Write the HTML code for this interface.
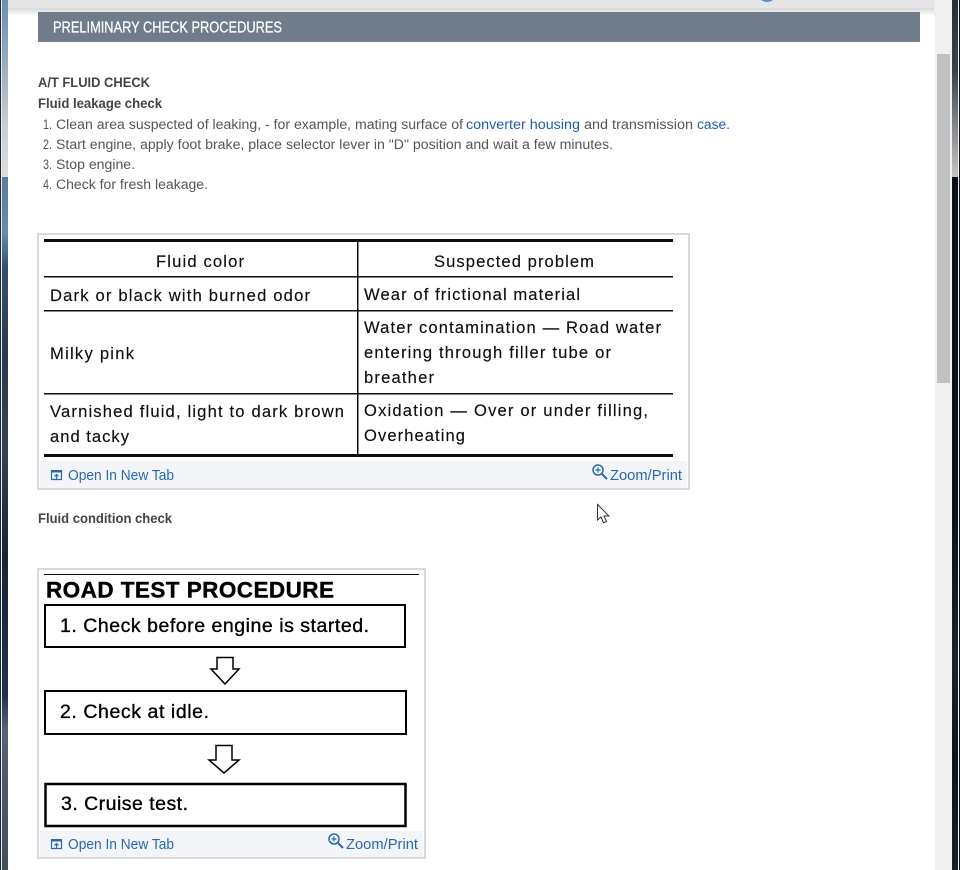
<!DOCTYPE html>
<html><head><meta charset="utf-8"><style>
html,body{margin:0;padding:0;width:960px;height:870px;overflow:hidden;background:#fff}
svg{display:block}
text{font-family:"Liberation Sans",sans-serif}
.b{font-weight:bold;font-size:13.5px;fill:#444}
.t{font-size:13.5px;fill:#555}
.l{font-size:13.5px;fill:#1f5fa8}
.f{font-size:14.5px;fill:#2a68ad}
.s{font-size:16.6px;fill:#111;stroke:#111;stroke-width:.15px}
.r{font-size:19.5px;fill:#000;stroke:#000;stroke-width:.35px}
</style></head><body>
<svg width="960" height="870" viewBox="0 0 960 870" xmlns="http://www.w3.org/2000/svg">
<defs>
<linearGradient id="lt" x1="0" y1="0" x2="0" y2="1"><stop offset="0" stop-color="#6f8dab"/><stop offset=".4" stop-color="#9fb0c0"/><stop offset=".7" stop-color="#c9cccf"/><stop offset="1" stop-color="#dedede"/></linearGradient>
<linearGradient id="lb" x1="0" y1="0" x2="0" y2="1"><stop offset="0" stop-color="#5f7a96"/><stop offset=".08" stop-color="#6a8cab"/><stop offset=".13" stop-color="#3a5069"/><stop offset=".25" stop-color="#2b3a4c"/><stop offset=".4" stop-color="#36424f"/><stop offset=".55" stop-color="#1a2534"/><stop offset=".75" stop-color="#23344a"/><stop offset=".8" stop-color="#5a6478"/><stop offset=".85" stop-color="#535a6c"/><stop offset="1" stop-color="#43515a"/></linearGradient>
<linearGradient id="rt" x1="0" y1="0" x2="0" y2="1"><stop offset="0" stop-color="#2a3034"/><stop offset=".4" stop-color="#3c4347"/><stop offset=".75" stop-color="#8b8f92"/><stop offset="1" stop-color="#c4c4c4"/></linearGradient>
<linearGradient id="rb" x1="0" y1="0" x2="0" y2="1"><stop offset="0" stop-color="#0b1116"/><stop offset=".5" stop-color="#0d1317"/><stop offset=".7" stop-color="#1d2328"/><stop offset=".85" stop-color="#0e1317"/><stop offset="1" stop-color="#1a2024"/></linearGradient>
<linearGradient id="sh" x1="0" y1="0" x2="0" y2="1"><stop offset="0" stop-color="#d8d8d8"/><stop offset="1" stop-color="#fff"/></linearGradient>
<filter id="soft" filterUnits="userSpaceOnUse" x="0" y="0" width="960" height="870"><feGaussianBlur stdDeviation=".35"/></filter>
</defs>

<!-- backdrop left -->
<rect x="0" y="0" width="1" height="870" fill="#1d2a38"/>
<rect x="1" y="0" width="1" height="870" fill="#e8ecef"/>
<rect x="2" y="0" width="6" height="177" fill="url(#lt)"/>
<rect x="2" y="177" width="6" height="693" fill="url(#lb)"/>
<!-- backdrop right -->
<rect x="952" y="0" width="6" height="177" fill="url(#rt)"/>
<rect x="952" y="177" width="6" height="693" fill="url(#rb)"/>
<rect x="958" y="0" width="1" height="870" fill="#f2f2f2"/>
<rect x="959" y="0" width="1" height="870" fill="#12171b"/>
<!-- scrollbar -->
<rect x="935" y="0" width="17" height="870" fill="#f0f0f0"/>
<rect x="937" y="54" width="13" height="329" fill="#c1c1c1"/>

<!-- top bar -->
<rect x="8" y="8" width="927" height="8" fill="url(#sh)"/>
<rect x="934" y="0" width="1" height="16" fill="#eaeaea"/>
<rect x="8" y="0" width="926" height="8" fill="#e6e6e8"/>
<ellipse cx="767" cy="-6" rx="9" ry="8" fill="#5a8fd6"/>

<!-- header -->
<rect x="38" y="12" width="882" height="30" fill="#717c8a"/>
<text x="53" y="32.500" font-size="15.500" fill="#fff" stroke="#fff" stroke-width=".25" textLength="229" lengthAdjust="spacingAndGlyphs">PRELIMINARY CHECK PROCEDURES</text>

<!-- body text -->
<text class="b" x="38" y="87" textLength="112" lengthAdjust="spacingAndGlyphs">A/T FLUID CHECK</text>
<text class="b" x="38" y="108" textLength="124" lengthAdjust="spacingAndGlyphs">Fluid leakage check</text>
<text class="t" x="43" y="129" textLength="9" lengthAdjust="spacingAndGlyphs">1.</text>
<text class="t" x="56" y="129" textLength="407" lengthAdjust="spacingAndGlyphs">Clean area suspected of leaking, - for example, mating surface of</text>
<text class="l" x="466" y="129" textLength="114" lengthAdjust="spacingAndGlyphs">converter housing</text>
<text class="t" x="584" y="129" textLength="109" lengthAdjust="spacingAndGlyphs">and transmission</text>
<text class="l" x="697" y="129" textLength="33" lengthAdjust="spacingAndGlyphs">case.</text>
<text class="t" x="43" y="149" textLength="9" lengthAdjust="spacingAndGlyphs">2.</text>
<text class="t" x="56" y="149" textLength="557" lengthAdjust="spacingAndGlyphs">Start engine, apply foot brake, place selector lever in "D" position and wait a few minutes.</text>
<text class="t" x="43" y="169" textLength="9" lengthAdjust="spacingAndGlyphs">3.</text>
<text class="t" x="56" y="169" textLength="79" lengthAdjust="spacingAndGlyphs">Stop engine.</text>
<text class="t" x="43" y="189" textLength="9" lengthAdjust="spacingAndGlyphs">4.</text>
<text class="t" x="56" y="189" textLength="152" lengthAdjust="spacingAndGlyphs">Check for fresh leakage.</text>

<!-- figure 1 -->
<rect x="38" y="234" width="651" height="255" fill="#fff" stroke="#d9d9d9" stroke-width="2"/>
<rect x="40" y="461" width="647" height="27" fill="#f3f5f9"/>
<g filter="url(#soft)">
<g fill="#111">
<rect x="44" y="239" width="629" height="3"/>
<rect x="44" y="276" width="629" height="1.500"/>
<rect x="44" y="310" width="629" height="1.500"/>
<rect x="44" y="393" width="629" height="1.500"/>
<rect x="44" y="454" width="629" height="3"/>
<rect x="357" y="240" width="1.500" height="215"/>
</g>
<text class="s" x="156" y="267" textLength="88" lengthAdjust="spacing">Fluid color</text>
<text class="s" x="434" y="267" textLength="160" lengthAdjust="spacing">Suspected problem</text>
<text class="s" x="50" y="301" textLength="260" lengthAdjust="spacing">Dark or black with burned odor</text>
<text class="s" x="364" y="300" textLength="216" lengthAdjust="spacing">Wear of frictional material</text>
<text class="s" x="364" y="333" textLength="297" lengthAdjust="spacing">Water contamination — Road water</text>
<text class="s" x="364" y="358" textLength="247" lengthAdjust="spacing">entering through filler tube or</text>
<text class="s" x="364" y="383" textLength="70" lengthAdjust="spacing">breather</text>
<text class="s" x="50" y="359" textLength="84" lengthAdjust="spacing">Milky pink</text>
<text class="s" x="50" y="417" textLength="294" lengthAdjust="spacing">Varnished fluid, light to dark brown</text>
<text class="s" x="50" y="442" textLength="79" lengthAdjust="spacing">and tacky</text>
<text class="s" x="364" y="416" textLength="284" lengthAdjust="spacing">Oxidation — Over or under filling,</text>
<text class="s" x="364" y="441" textLength="101" lengthAdjust="spacing">Overheating</text>
</g>

<!-- figure 1 footer -->
<g fill="none" stroke="#2a68ad">
<path d="M51.500 471v8.500h10v-8.500z" stroke-width="1.200"/>
<path d="M51 470h11v2.500H51z" fill="#2a68ad" stroke="none"/>
<path d="M56.500 479v-4.500M54.500 476.500l2-2 2 2" stroke-width="1.200"/>
<circle cx="598" cy="470" r="5" stroke-width="1.500"/>
<path d="M602 474l5 5" stroke-width="2"/>
<path d="M595.500 470h5M598 467.500v5" stroke-width="1.200"/>
</g>
<text class="f" x="68" y="480" textLength="106" lengthAdjust="spacingAndGlyphs">Open In New Tab</text>
<text class="f" x="610" y="480" textLength="72" lengthAdjust="spacingAndGlyphs">Zoom/Print</text>

<text class="b" x="38" y="523" textLength="134" lengthAdjust="spacingAndGlyphs">Fluid condition check</text>

<!-- cursor -->
<path d="M597.500 504.500v15.500l3.500-3 2.500 5.800 3-1.300-2.500-5.500h5z" fill="#fff" stroke="#333" stroke-width="1"/>

<!-- figure 2 -->
<rect x="38" y="569" width="387" height="289" fill="#fff" stroke="#d9d9d9" stroke-width="2"/>
<rect x="40" y="831" width="383" height="26" fill="#f3f5f9"/>
<g filter="url(#soft)">
<rect x="44" y="574" width="375" height="1" fill="#111"/>
<text x="46" y="597.500" font-size="22.500" font-weight="bold" fill="#000" stroke="#000" stroke-width=".4" textLength="288" lengthAdjust="spacing">ROAD TEST PROCEDURE</text>
<g fill="none" stroke="#000">
<rect x="45" y="605" width="360" height="42" stroke-width="2"/>
<rect x="45" y="691" width="361" height="43" stroke-width="2"/>
<rect x="45.500" y="784" width="360" height="42" stroke-width="2.500"/>
<path d="M217 657.500h16v11.500h6l-14 15-14-15h6z" stroke-width="1.500"/>
<path d="M216 745.500h16v14.500h7l-15 13-15-13h7z" stroke-width="1.500"/>
</g>
<text class="r" x="60" y="632" textLength="309" lengthAdjust="spacing">1. Check before engine is started.</text>
<text class="r" x="60" y="718" textLength="149" lengthAdjust="spacing">2. Check at idle.</text>
<text class="r" x="61" y="810" textLength="127" lengthAdjust="spacing">3. Cruise test.</text>
</g>

<!-- figure 2 footer -->
<g fill="none" stroke="#2a68ad">
<path d="M51.500 840v8.500h10v-8.500z" stroke-width="1.200"/>
<path d="M51 839h11v2.500H51z" fill="#2a68ad" stroke="none"/>
<path d="M56.500 848v-4.500M54.500 845.500l2-2 2 2" stroke-width="1.200"/>
<circle cx="334" cy="839" r="5" stroke-width="1.500"/>
<path d="M338 843l5 5" stroke-width="2"/>
<path d="M331.500 839h5M334 836.500v5" stroke-width="1.200"/>
</g>
<text class="f" x="68" y="849" textLength="106" lengthAdjust="spacingAndGlyphs">Open In New Tab</text>
<text class="f" x="346" y="849" textLength="72" lengthAdjust="spacingAndGlyphs">Zoom/Print</text>
</svg>
</body></html>
